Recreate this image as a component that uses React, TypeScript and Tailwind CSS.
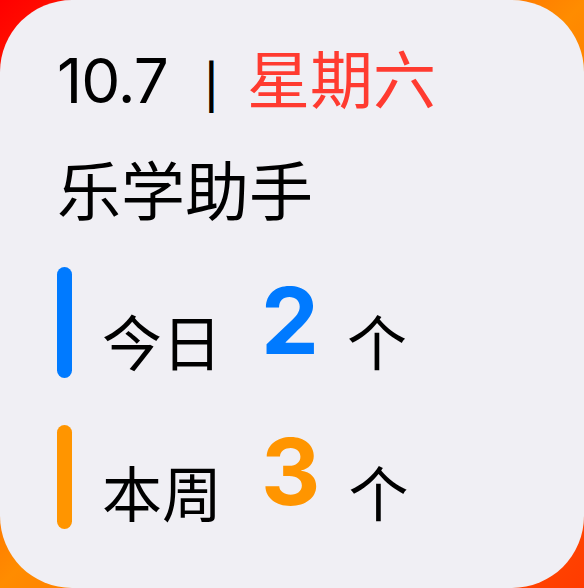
import React from "react";

const latin = "font-['Inter','Liberation_Sans',sans-serif]";
const cjk = "font-['Noto_Sans_CJK_SC','Noto_Sans',sans-serif]";

function Row({ bar, label, num, numColor, h }: { bar: string; label: string; num: string; numColor: string; h: string }) {
  return (
    <div className="flex items-stretch">
      <div className={`w-[15px] ${h} rounded-full ${bar}`} />
      <div className="ml-[30px] mb-[8px] flex items-end">
        <span className={`${cjk} text-[60px] leading-none text-black`}>{label}</span>
        <span className={`${latin} ml-[39px] mb-[3px] text-[92px] leading-none font-bold ${numColor}`}>{num}</span>
        <span className={`${cjk} ml-[28px] text-[60px] leading-none text-black`}>个</span>
      </div>
    </div>
  );
}

export default function App() {
  return (
    <div className="w-[584px] h-[588px] bg-[linear-gradient(135deg,#ff0000_0%,#ff8c00_50%,#ff3b00_100%)]">
      <div className="w-full h-full rounded-[72px] bg-[#f0eff4] pl-[57px] pt-[44px] flex flex-col">
        <div className="flex items-baseline">
          <span className={`${latin} text-[62px] leading-none text-black tracking-[-1px]`}>10.7</span>
          <span className={`${latin} ml-[36px] text-[44px] leading-none text-black font-medium`}>|</span>
          <span className={`${cjk} ml-[28px] text-[63px] leading-none text-[#ff3b30]`}>星期六</span>
        </div>
        <div className={`${cjk} mt-[43px] text-[64px] leading-none text-black`}>乐学助手</div>
        <div className="mt-[48px] flex flex-col gap-[47px]">
          <Row bar="bg-[#007aff]" h="h-[111px]" label="今日" num="2" numColor="text-[#007aff]" />
          <Row bar="bg-[#ff9500]" h="h-[104px]" label="本周" num="3" numColor="text-[#ff9500]" />
        </div>
      </div>
    </div>
  );
}
